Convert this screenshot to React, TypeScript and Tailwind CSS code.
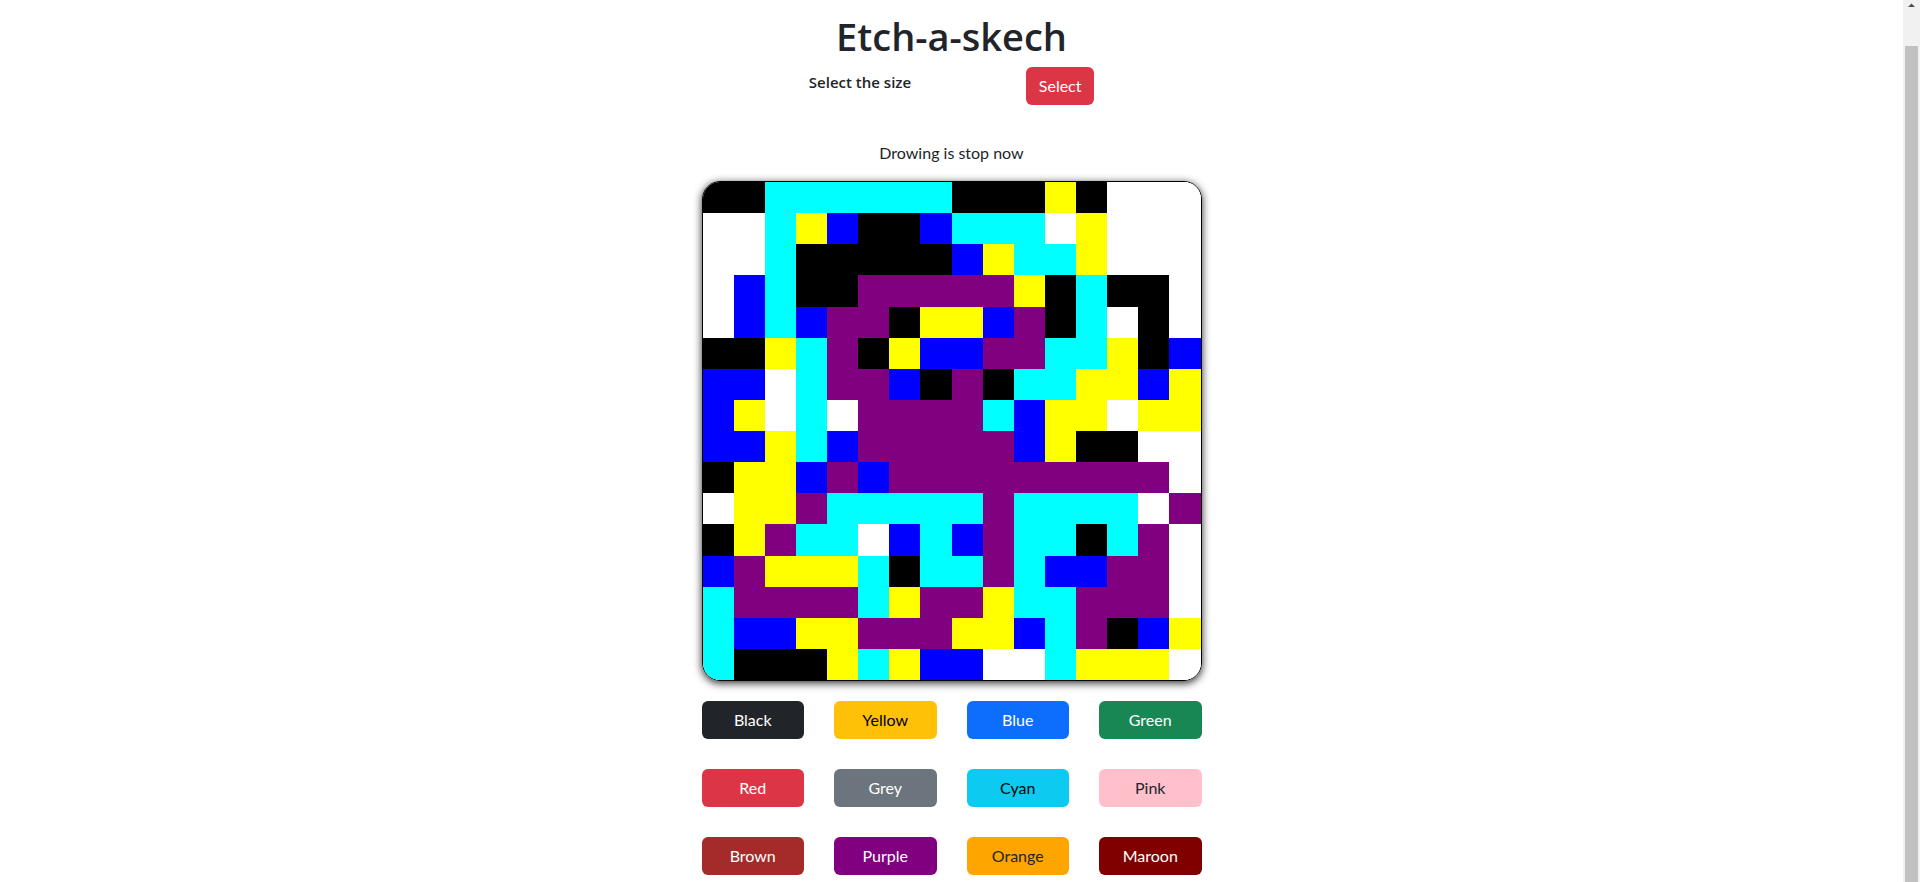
const K = "#000000"
const C = "#00ffff"
const Y = "#ffff00"
const B = "#0000ff"
const P = "#800080"
const W = "#ffffff"

const grid: string[][] = [
  [K, K, C, C, C, C, C, C, K, K, K, Y, K, W, W, W],
  [W, W, C, Y, B, K, K, B, C, C, C, W, Y, W, W, W],
  [W, W, C, K, K, K, K, K, B, Y, C, C, Y, W, W, W],
  [W, B, C, K, K, P, P, P, P, P, Y, K, C, K, K, W],
  [W, B, C, B, P, P, K, Y, Y, B, P, K, C, W, K, W],
  [K, K, Y, C, P, K, Y, B, B, P, P, C, C, Y, K, B],
  [B, B, W, C, P, P, B, K, P, K, C, C, Y, Y, B, Y],
  [B, Y, W, C, W, P, P, P, P, C, B, Y, Y, W, Y, Y],
  [B, B, Y, C, B, P, P, P, P, P, B, Y, K, K, W, W],
  [K, Y, Y, B, P, B, P, P, P, P, P, P, P, P, P, W],
  [W, Y, Y, P, C, C, C, C, C, P, C, C, C, C, W, P],
  [K, Y, P, C, C, W, B, C, B, P, C, C, K, C, P, W],
  [B, P, Y, Y, Y, C, K, C, C, P, C, B, B, P, P, W],
  [C, P, P, P, P, C, Y, P, P, Y, C, C, P, P, P, W],
  [C, B, B, Y, Y, P, P, P, Y, Y, B, C, P, K, B, Y],
  [C, K, K, K, Y, C, Y, B, B, W, W, C, Y, Y, Y, W],
]

const colors = [
  { name: "Black", cls: "bg-[#212529] text-white" },
  { name: "Yellow", cls: "bg-[#ffc107] text-black" },
  { name: "Blue", cls: "bg-[#0d6efd] text-white" },
  { name: "Green", cls: "bg-[#198754] text-white" },
  { name: "Red", cls: "bg-[#dc3545] text-white" },
  { name: "Grey", cls: "bg-[#6c757d] text-white" },
  { name: "Cyan", cls: "bg-[#0dcaf0] text-black" },
  { name: "Pink", cls: "bg-[#ffc0cb] text-[#212529]" },
  { name: "Brown", cls: "bg-[#a52a2a] text-white" },
  { name: "Purple", cls: "bg-[#800080] text-white" },
  { name: "Orange", cls: "bg-[#ffa500] text-[#212529]" },
  { name: "Maroon", cls: "bg-[#800000] text-white" },
]

function Scrollbar() {
  return (
    <div className="flex w-[17px] flex-col items-center bg-[#f1f1f1]">
      <svg width="17" height="17" viewBox="0 0 17 17" className="shrink-0">
        <path d="M5 7 L8.5 3.5 L12 7 Z" fill="#505050" />
      </svg>
      <div className="mt-[29px] w-[13px] flex-1 bg-[#c1c1c1]" />
    </div>
  )
}

export default function App() {
  return (
    <div className="flex h-[882px] overflow-hidden bg-white text-[#212529]">
      <main className="flex-1 font-['Lato',sans-serif]">
        {/* Header */}
        <h1 className="pt-[12px] text-center font-['Open_Sans',sans-serif] text-[38px] font-semibold leading-[48px]">
          Etch-a-skech
        </h1>
        <div className="mt-[7px] flex justify-center gap-[115px]">
          <label className="mt-[3px] font-['Open_Sans',sans-serif] text-[15px] font-semibold leading-[24px]">
            Select the size
          </label>
          <button className="h-[38px] w-[68px] rounded-[6px] bg-[#dc3545] text-[16px] text-white">Select</button>
        </div>

        <p className="mt-[36px] text-center text-[16px] leading-[24px]">Drowing is stop now</p>

        {/* Board */}
        <div className="mx-auto mt-[16px] w-[500px]">
          <div className="grid h-[500px] w-[500px] grid-cols-16 grid-rows-16 overflow-hidden rounded-[18px] border border-black shadow-[0_2px_8px_rgba(0,0,0,0.85)]">
            {grid.flat().map((c, i) => (
              <div key={i} style={{ backgroundColor: c }} />
            ))}
          </div>

          {/* Palette */}
          <div className="mt-[20px] grid grid-cols-4 gap-x-[30px] gap-y-[30px]">
            {colors.map((c) => (
              <button key={c.name} className={`h-[38px] rounded-[6px] text-[16px] ${c.cls}`}>
                {c.name}
              </button>
            ))}
          </div>
        </div>
      </main>
      <Scrollbar />
    </div>
  )
}
